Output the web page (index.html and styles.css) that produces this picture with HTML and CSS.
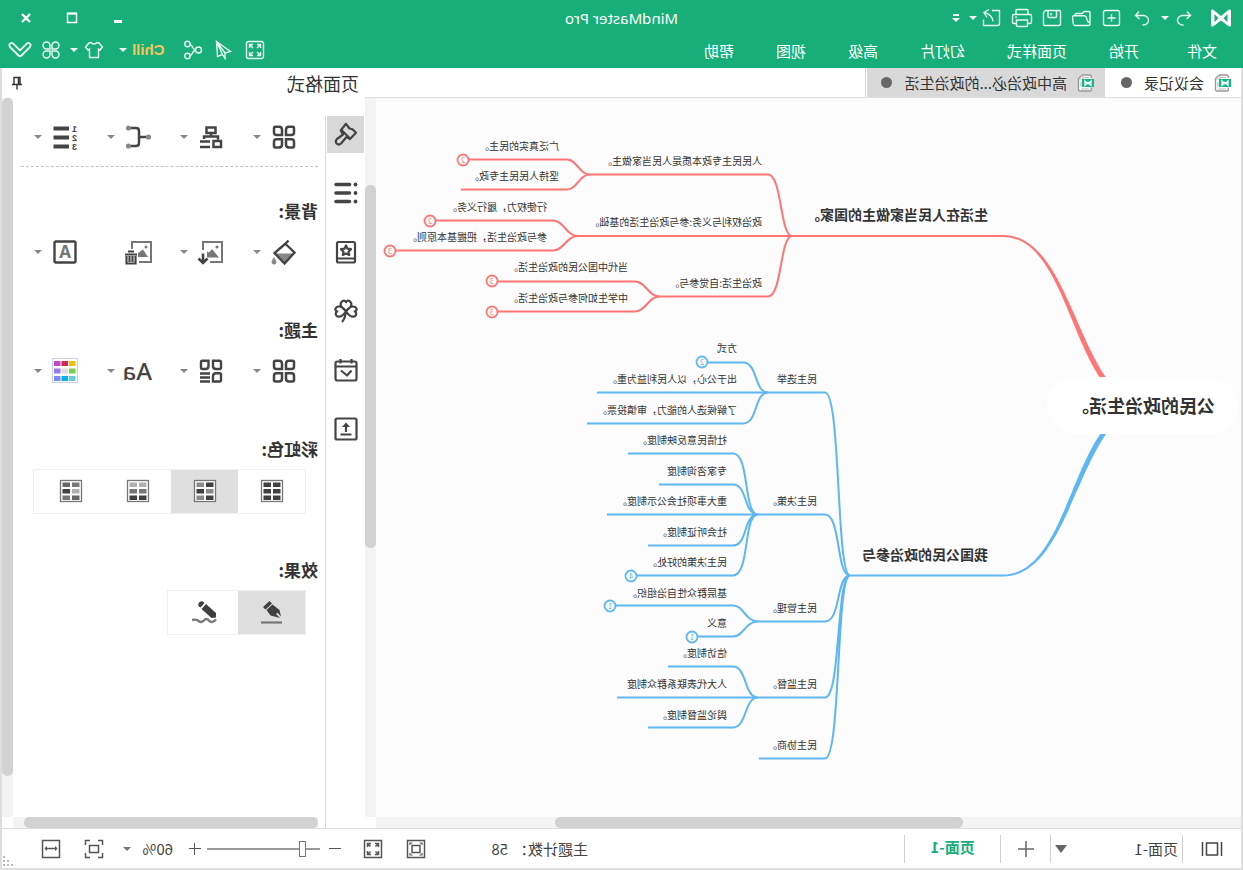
FILE: index.html
```html
<!DOCTYPE html>
<html lang="zh-CN">
<head>
<meta charset="utf-8">
<title>MindMaster Pro</title>
<link rel="stylesheet" href="styles.css">
</head>
<body>
<div class="window">
  <header class="header">
    <div class="titlebar">
      <div class="quick">
        <svg class="logo" width="20" height="18" viewBox="0 0 20 18"><path fill="#fff" stroke="none" fill-rule="evenodd" d="M0 2Q0 0 2 .5L10 7L18 .5Q20 0 20 2V16Q20 18 18 17.500L10 11.500L2 17.500Q0 18 0 16ZM3.500 5V13L7.500 9.200ZM16.500 5V13L12.500 9.200Z"/></svg>
        <button class="qbtn" aria-label="撤销"><svg width="20" height="20" viewBox="0 0 20 20"><path d="M7 3.500L3.500 7.500L7.500 11M4 7.500H11.500A5 4.700 0 0 1 11.500 17H10.500"/></svg></button>
        <button class="drop" aria-label="撤销列表"></button>
        <button class="qbtn after-drop" aria-label="恢复"><svg width="20" height="20" viewBox="0 0 20 20"><path d="M13 3.500L16.500 7.500L12.500 11M16 7.500H8.500A5 4.700 0 0 0 8.500 17H9.500"/></svg></button>
        <button class="qbtn" aria-label="新建"><svg width="20" height="20" viewBox="0 0 20 20"><rect x="2.500" y="2.500" width="16" height="15" rx="2"/><path d="M10.500 6V14M6.500 10H14.500"/></svg></button>
        <button class="qbtn" aria-label="打开"><svg width="20" height="20" viewBox="0 0 20 20"><path d="M2 16.500V4.500Q2 3.500 3 3.500H8L10 5.500H15.500Q17 5.500 17 7.500M2 16Q2 17.500 3.500 17.500H17Q18.500 17.500 18.700 16L19.500 9.500Q19.500 7.700 18 7.700H8Q6.300 7.700 5.800 9L4.500 13Q4 14.500 2 14.500"/></svg></button>
        <button class="qbtn" aria-label="保存"><svg width="20" height="20" viewBox="0 0 20 20"><path d="M3 2.500H16.500L18.500 4.500V16.500Q18.500 17.500 17.500 17.500H3Q1.500 17.500 1.500 16V4Q1.500 2.500 3 2.500ZM5.500 2.500V8.500Q5.500 9.500 6.500 9.500H13Q14 9.500 14 8.500V2.500M11 5V7.500"/></svg></button>
        <button class="qbtn" aria-label="打印"><svg width="22" height="20" viewBox="0 0 22 20"><path d="M5 6.500V2.500Q5 1.500 6 1.500H16Q17 1.500 17 2.500V6.500M5 15.500H3Q1.500 15.500 1.500 14V8Q1.500 6.500 3 6.500H19Q20.500 6.500 20.500 8V14Q20.500 15.500 19 15.500H17M5.500 12H16.500V17.500Q16.500 18.500 15.500 18.500H6.500Q5.500 18.500 5.500 17.500ZM16 9.300H18"/></svg></button>
        <button class="qbtn" aria-label="导出"><svg width="20" height="20" viewBox="0 0 20 20"><path d="M10 2.500H2.500V15.500Q2.500 17.500 4.500 17.500H18.500V11.500M13 1.500L18 4.500L15 9.500M18 4.500Q10 6 9 13.500"/></svg></button>
        <button class="drop" aria-label="导出列表"></button>
        <button class="drop more" aria-label="自定义"></button>
      </div>
      <h1 class="apptitle">MindMaster Pro</h1>
      <div class="winbtns">
        <button aria-label="最小化"><svg width="12" height="12"><path d="M2 9.500H10" stroke-width="3"/></svg></button>
        <button aria-label="最大化"><svg width="12" height="12"><path d="M1.500 1.500H10.500V10.500H1.500Z" stroke-width="1.500"/><path d="M1 1.500H11" stroke-width="2"/></svg></button>
        <button aria-label="关闭"><svg width="12" height="12"><path d="M2 2L10 10M10 2L2 10" stroke-width="2.400"/></svg></button>
      </div>
    </div>
    <div class="menubar">
      <nav class="menus">
        <button class="file">文件</button><button>开始</button><button>页面样式</button><button>幻灯片</button><button>高级</button><button>视图</button><button>帮助</button>
      </nav>
      <div class="menutools">
        <button aria-label="全屏"><svg width="20" height="20" viewBox="0 0 20 20"><rect x="1.500" y="1.500" width="17" height="17" rx="2"/><path d="M4.500 8V4.500H8M4.500 4.500L8 8M12 4.500H15.500V8M15.500 4.500L12 8M4.500 12V15.500H8M4.500 15.500L8 12M12 15.500H15.500V12M15.500 15.500L12 12"/></svg></button>
        <button class="g12" aria-label="发送"><svg width="20" height="20" viewBox="0 0 20 20"><path d="M16.500 1.500L2.500 11.500L8 13V18.500L10.500 14.500L15.500 16.500ZM16.500 1.500L8 13M16.500 1.500L10.500 14.500"/></svg></button>
        <button class="g10" aria-label="分享"><svg width="20" height="20" viewBox="0 0 20 20"><circle cx="4.500" cy="10" r="3"/><circle cx="15.500" cy="4" r="2.700"/><circle cx="15.500" cy="16" r="2.700"/><path d="M7.300 9.500Q9.500 9.500 10.300 7.500Q11 5 13 4.500M7.300 10.500Q9.500 10.500 10.300 12.500Q11 15 13 15.500"/></svg></button>
        <button class="chill">Chill</button>
        <button class="drop g5" aria-label="主题列表"></button>
        <button class="g15" aria-label="换肤"><svg width="20" height="20" viewBox="0 0 20 20"><path d="M7 2.500Q10 5.500 13 2.500L15 3L18.500 7L16 10L14.500 9V17.500H5.500V9L4 10L1.500 7L5 3Z"/></svg></button>
        <button class="drop g6" aria-label="皮肤列表"></button>
        <button class="g8" aria-label="应用"><svg width="20" height="20" viewBox="0 0 20 20"><path d="M9 9H5.500A3.500 3.500 0 1 1 9 5.500ZM11 9V5.500A3.500 3.500 0 1 1 14.500 9ZM9 11V14.500A3.500 3.500 0 1 1 5.500 11ZM11 11H14.500A3.500 3.500 0 1 1 11 14.500Z"/></svg></button>
        <button class="g8" aria-label="收起"><svg width="24" height="20" viewBox="0 0 24 20"><path d="M1.500 4.500Q3.500 1.500 5.500 4L12 10.500L18.500 4Q20.500 1.500 22.500 4.500Q23 6 21.500 7.500L13.500 15.500Q12 17 10.500 15.500L2.500 7.500Q1 6 1.500 4.500Z" stroke-width="1.800"/></svg></button>
      </div>
    </div>
  </header>

  <main class="main">
    <section class="workspace">
      <div class="tabs">
        <button class="tab"><svg class="doc" width="17" height="18" viewBox="0 0 17 18"><use href="#doc"/></svg><span>会议记录</span><i class="dot"></i></button>
        <button class="tab current"><svg class="doc" width="17" height="18" viewBox="0 0 17 18"><use href="#doc"/></svg><span>高中政治必...的政治生活</span><i class="dot"></i></button>
        <div class="tabrest"></div>
      </div>
      <div class="canvas">
        <svg class="map" width="865" height="719" viewBox="2 98 865 719">
          <g class="red">
            <path class="trunk" d="M92 406C165 406 167 235 240 235V237C170 237 171 406 99 406Z"/>
            <path d="M240 236H666M449 236H451C463 236 461 174.500 475 174.500H654M451 236C463 236 461 296.500 475 296.500H584"/>
            <path d="M653 174.500C664 174.500 666 159.500 676 159.500H774M653 174.500C664 174.500 666 189.500 676 189.500H782"/>
            <path d="M665 236C677 236 679 220.500 690 220.500H807M665 236C677 236 679 250.500 690 250.500H847"/>
            <path d="M583 296.500C595 296.500 597 281.500 608 281.500H745M583 296.500C595 296.500 597 311.500 608 311.500H745"/>
            <circle cx="780" cy="160" r="5.500"/><circle cx="813" cy="221" r="5.500"/><circle cx="853" cy="251" r="5.500"/><circle cx="751" cy="281" r="5.500"/><circle cx="751" cy="312" r="5.500"/>
            <g class="count"><text x="780" y="163">2</text><text x="813" y="224">2</text><text x="853" y="254">3</text><text x="751" y="284">3</text><text x="751" y="315">3</text></g>
          </g>
          <g class="blue">
            <path class="trunk" d="M92 406C165 406 167 576.500 240 576.500V574.500C170 574.500 171 406 99 406Z"/>
            <path d="M240 575.500H393C407 575.500 402 392.500 418 392.500H646M393 575.500C407 575.500 402 514.500 418 514.500H636M393 575.500C407 575.500 402 621.500 418 621.500H486M393 575.500C407 575.500 402 697.500 418 697.500H626M393 575.500C407 575.500 402 758.500 418 758.500H484"/>
            <path d="M475 392.500C489 392.500 485 362.500 500 362.500H535M475 392.500C489 392.500 485 423.500 500 423.500H656"/>
            <path d="M485 514.500C500 514.500 493 453.500 510 453.500H615M485 514.500C500 514.500 495 484.500 510 484.500H584M485 514.500C500 514.500 495 545.500 510 545.500H595M485 514.500C500 514.500 493 575.500 510 575.500H606"/>
            <path d="M485 621.500C498 621.500 499 605.500 510 605.500H627M485 621.500C498 621.500 499 636.500 510 636.500H545"/>
            <path d="M485 697.500C499 697.500 496 666.500 510 666.500H575M485 697.500C499 697.500 496 727.500 510 727.500H595"/>
            <circle cx="541" cy="362" r="5.500"/><circle cx="612" cy="576" r="5.500"/><circle cx="633" cy="606" r="5.500"/><circle cx="551" cy="637" r="5.500"/>
            <g class="count"><text x="541" y="365">2</text><text x="612" y="579">4</text><text x="633" y="609">1</text><text x="551" y="640">1</text></g>
          </g>
          <rect class="root" x="5" y="377" width="191" height="57" rx="28"/>
          <text class="t-root" x="28" y="413">公民的政治生活。</text>
          <g class="t-main">
            <text x="255" y="220">生活在人民当家做主的国家。</text>
            <text x="255" y="560">我国公民的政治参与</text>
          </g>
          <g class="t-sub">
            <text x="481" y="165">人民民主专政本质是人民当家做主。</text>
            <text x="481" y="226">政治权利与义务:参与政治生活的基础。</text>
            <text x="481" y="287">政治生活:自觉参与。</text>
            <text x="684" y="150">广泛真实的民主。</text>
            <text x="684" y="180">坚持人民民主专政。</text>
            <text x="696" y="211">行使权力，履行义务。</text>
            <text x="696" y="241">参与政治生活，把握基本原则。</text>
            <text x="615" y="271">当代中国公民的政治生活。</text>
            <text x="615" y="302">中学生如何参与政治生活。</text>
            <text x="426" y="383">民主选举</text>
            <text x="426" y="505">民主决策。</text>
            <text x="426" y="612">民主管理。</text>
            <text x="426" y="688">民主监督。</text>
            <text x="426" y="749">民主协商。</text>
            <text x="506" y="352">方式</text>
            <text x="506" y="383">出于公心，以人民利益为重。</text>
            <text x="506" y="414">了解候选人的能力，审慎投票。</text>
            <text x="516" y="444">社情民意反映制度。</text>
            <text x="516" y="475">专家咨询制度</text>
            <text x="516" y="505">重大事项社会公示制度。</text>
            <text x="516" y="536">社会听证制度。</text>
            <text x="516" y="566">民主决策的好处。</text>
            <text x="516" y="597">基层群众性自治组织。</text>
            <text x="516" y="627">意义</text>
            <text x="516" y="657">信访制度。</text>
            <text x="516" y="688">人大代表联系群众制度</text>
            <text x="516" y="719">舆论监督制度。</text>
          </g>
        </svg>
      </div>
      <div class="vbar canvas-v"><i></i></div>
      <div class="hbar canvas-h"><i></i></div>
    </section>

    <aside class="panel">
      <div class="panelhead">
        <h2>页面格式</h2>
        <button aria-label="固定"><svg width="12" height="14" viewBox="0 0 12 14"><path d="M3 8.500V1.500H9V8.500M1 8.500H11M6 8.500V13.500M4.500 1.500V8.500" fill="none" stroke="#333" stroke-width="1.400"/></svg></button>
      </div>
      <nav class="rail">
        <button class="on" aria-label="格式"><svg width="24" height="24" viewBox="0 0 24 24"><path d="M12 1.800L8.500 6.500L5.500 7.200L2 10.800L8 17L11.500 15L17 21.500Q19 23.500 21.500 21.500Q23 19 21 17L15 12.500L17.300 8.500ZM16.500 8L8 16.500"/></svg></button>
        <button aria-label="大纲"><svg width="24" height="24" viewBox="0 0 24 24"><path d="M8.500 3.500H22M8.500 12H22M8.500 20.500H22" stroke-width="3.600" stroke-linecap="round"/><g fill="#444" stroke="none"><circle cx="2.500" cy="3.500" r="1.900"/><circle cx="2.500" cy="12" r="1.900"/><circle cx="2.500" cy="20.500" r="1.900"/></g></svg></button>
        <button aria-label="收藏"><svg width="24" height="24" viewBox="0 0 24 24"><rect x="3" y="2" width="18" height="20.500" rx="1.500"/><path d="M3 18.500H21M12 5.500L13.500 8.700L17 9.200L14.500 11.700L15.200 15L12 13.400L8.800 15L9.500 11.700L7 9.200L10.500 8.700Z"/></svg></button>
        <button aria-label="剪贴画"><svg width="24" height="24" viewBox="0 0 24 24"><path d="M12 12C7 8.500 5.500 5.500 7.500 3C9 1 11.500 1.200 12 3.200C12.500 1.200 15 1 16.500 3C18.500 5.500 17 8.500 12 12C8.500 7.500 4.500 6.500 2.300 8.500C.7 10 1.300 12 3.300 12.500C1.200 13.500 1.200 16 3.200 17.200C6 18.600 9.500 16.500 12 12C14.500 16.500 18 18.600 20.800 17.200C22.800 16 22.800 13.500 20.700 12.500C22.700 12 23.300 10 21.700 8.500C19.500 6.500 15.500 7.500 12 12Q12.500 19 16 23"/></svg></button>
        <button aria-label="任务"><svg width="24" height="24" viewBox="0 0 24 24"><rect x="1.500" y="3.500" width="21" height="19" rx="2"/><path d="M1.500 8.500H22.500M6.500 1V5.500M17.500 1V5.500M6.500 12.500L11 17.500L17 12.500"/></svg></button>
        <button aria-label="上传"><svg width="24" height="24" viewBox="0 0 24 24"><rect x="1.500" y="1.500" width="21" height="21" rx="1.500"/><path d="M6.500 17.500H17.500M12 15V8"/><path d="M12 5.500L16 10H8Z" fill="#444" stroke="none"/></svg></button>
      </nav>
      <div class="format">
        <div class="tools">
          <button aria-label="布局"><svg width="28" height="28" viewBox="0 0 28 28"><use href="#four"/></svg></button>
          <button aria-label="结构"><svg width="28" height="28" viewBox="0 0 28 28"><path d="M9.500 4.500H18.500V10H9.500ZM14 10V13.500M7 16.500V13.500H21V16M4 18H11.500V24H4ZM15 18.500H25M15 24H25" stroke-width="2.500"/></svg></button>
          <button aria-label="连接线"><svg width="28" height="28" viewBox="0 0 28 28"><path d="M5 14H13M21 5H16Q13 5 13 8V20Q13 23 16 23H21" stroke-width="2.500"/><g fill="#888" stroke="none"><circle cx="3.500" cy="14" r="2.600"/><circle cx="23.500" cy="5" r="2.600"/><circle cx="23.500" cy="23" r="2.600"/></g></svg></button>
          <button aria-label="编号"><svg width="28" height="28" viewBox="0 0 28 28"><path d="M10 5.500H25.500M10 14.500H25.500M10 23.500H25.500" stroke-width="4"/><g class="nums"><text x="2" y="9">1</text><text x="2" y="18">2</text><text x="2" y="27">3</text></g></svg></button>
        </div>
        <hr>
        <h3>背景:</h3>
        <div class="tools">
          <button aria-label="填充"><svg width="28" height="28" viewBox="0 0 28 28"><path d="M4 15.500H23L13.500 25Z" fill="#888" stroke="none"/><path d="M9.500 2.500L13 6L23.500 15L13.500 25.500L3.500 14.500L13 5.500" stroke-width="2.400"/><path d="M24 19Q27.500 24 26 25.500Q24 27.500 22 25.500Q20.500 24 24 19Z" fill="#888" stroke="none"/></svg></button>
          <button aria-label="插入图片"><svg width="28" height="28" viewBox="0 0 28 28"><path d="M15 24H3V4H22V12" stroke="#777" stroke-width="2"/><path d="M6 19.500L13 11L16 14.500L18 13.500V19.500Z" fill="#777" stroke="none"/><circle cx="8" cy="9" r="1.500" fill="#777" stroke="none"/><path d="M22 15.500V25M17.500 20.500L22 25L26.500 20.500" stroke-width="2.600"/></svg></button>
          <button class="nodrop" aria-label="删除图片"><svg width="28" height="28" viewBox="2 0 28 28"><path d="M15 24H3V4H22V11" stroke="#777" stroke-width="2"/><path d="M6 19L11 11.500L16 15V19Z" fill="#777" stroke="none"/><circle cx="8" cy="9" r="1.500" fill="#777" stroke="none"/><path d="M17 16.500H29M20 13.500H26M18.500 18V25.500H27.500V18M21.500 18V24M24.500 18V24" stroke-width="2.200"/></svg></button>
          <button aria-label="水印"><svg width="28" height="28" viewBox="0 0 28 28"><rect x="3.500" y="3.500" width="21" height="21" rx="1.500" stroke-width="2.400"/><text class="mark" x="14" y="20">A</text></svg></button>
        </div>
        <h3 class="far">主题:</h3>
        <div class="tools">
          <button aria-label="主题"><svg width="28" height="28" viewBox="0 0 28 28"><use href="#four"/></svg></button>
          <button aria-label="主题样式"><svg width="28" height="28" viewBox="0 0 28 28"><path d="M4 5.200Q4 3.800 5.400 3.800H12V9Q12 12 9 12H5.400Q4 12 4 10.600ZM16.500 3.800H22.600Q24 3.800 24 5.200V10.600Q24 12 22.600 12H19.500Q16.500 12 16.500 9ZM4 17.500Q4 16.200 5.400 16.200H9Q12 16.200 12 19.200V24.500H5.400Q4 24.500 4 23ZM15 16.500H25M15 20.500H25M15 24.500H25" stroke-width="2.400"/></svg></button>
          <button class="aa" aria-label="字体">Aa</button>
          <button aria-label="颜色"><svg width="28" height="28" viewBox="0 0 28 28"><rect x="1.500" y="1.500" width="25" height="24" fill="#fff" stroke="#ccd2e8"/><g stroke="none"><path fill="#edc200" d="M3.500 4H10V9H3.500Z"/><path fill="#d8264f" d="M11 4H17.500V9H11Z"/><path fill="#c24bcb" d="M18.500 4H25V9H18.500Z"/><path fill="#78d04b" d="M3.500 11.500H10V16.500H3.500Z"/><path fill="#ddd" d="M11 11.500H17.500V16.500H11Z"/><path fill="#9678f0" d="M18.500 11.500H25V16.500H18.500Z"/><path fill="#66cbdc" d="M3.500 19H10V24H3.500Z"/><path fill="#00b5ee" d="M11 19H17.500V24H11Z"/><path fill="#7c8afa" d="M18.500 19H25V24H18.500Z"/></g></svg></button>
        </div>
        <h3 class="far">彩虹色:</h3>
        <div class="seg">
          <button aria-label="单色"><svg width="24" height="24" viewBox="0 0 24 24"><use href="#sheet"/><g fill="#404040"><path d="M3.500 3.500H11V8H3.500ZM13 3.500H20.500V8H13ZM3.500 10H11V14.500H3.500ZM13 10H20.500V14.500H13ZM3.500 16.500H11V21H3.500ZM13 16.500H20.500V21H13Z"/></g></svg></button>
          <button class="on" aria-label="彩虹一"><svg width="24" height="24" viewBox="0 0 24 24"><use href="#sheet"/><path fill="#404040" d="M3.500 3.500H11V8H3.500ZM13 10H20.500V14.500H13ZM3.500 16.500H11V21H3.500Z"/><path fill="#8a8a8a" d="M13 3.500H20.500V8H13ZM3.500 10H11V14.500H3.500ZM13 16.500H20.500V21H13Z"/></svg></button>
          <button aria-label="彩虹二"><svg width="24" height="24" viewBox="0 0 24 24"><use href="#sheet"/><path fill="#b0b0b0" d="M3.500 3.500H11V8H3.500ZM13 3.500H20.500V8H13Z"/><path fill="#777" d="M3.500 10H11V14.500H3.500ZM13 10H20.500V14.500H13Z"/><path fill="#404040" d="M3.500 16.500H11V21H3.500ZM13 16.500H20.500V21H13Z"/></svg></button>
          <button class="wide" aria-label="彩虹三"><svg width="24" height="24" viewBox="0 0 24 24"><use href="#sheet"/><path fill="#777" d="M3.500 3.500H11V8H3.500ZM13 16.500H20.500V21H13Z"/><path fill="#666" d="M13 3.500H20.500V8H13ZM3.500 16.500H11V21H3.500Z"/><path fill="#b0b0b0" d="M3.500 10H11V14.500H3.500Z"/><path fill="#404040" d="M13 10H20.500V14.500H13Z"/></svg></button>
        </div>
        <h3 class="farther">效果:</h3>
        <div class="seg">
          <button class="on" aria-label="标准"><svg width="26" height="26" viewBox="0 0 26 26"><path d="M3 23.500H24" stroke="#777" stroke-width="2.200"/><path fill="#404040" d="M15.500 2L22 8L19.500 10.500L13 4.500ZM12.500 5.500L18.500 11L14.500 16.500L5 19L9 15L7.500 13.800L4 17.500L5.500 11Z"/></svg></button>
          <button class="wide" aria-label="手绘"><svg width="26" height="26" viewBox="0 0 26 26"><path d="M2 20.500Q5 24 8 22.500Q11 19 13 20.500Q17 25 20 21.500Q22 20 26 21" fill="none" stroke="#777" stroke-width="2.400"/><path fill="#404040" d="M13.500 4L15 2.500Q17 1.500 19 3.500Q20.500 5.500 19 7.500L17.500 8.500ZM12 5L16.500 10L6.500 19L2 18.500V14Z"/></svg></button>
        </div>
      </div>
      <div class="vbar panel-v"><i></i></div>
      <div class="hbar panel-h"><i></i></div>
    </aside>
  </main>

  <footer class="status">
    <div class="pages">
      <button class="outline" aria-label="页面视图"><svg width="22" height="16" viewBox="0 0 22 16"><path d="M5.500 2H16.500V14H5.500ZM1.500 1V15M20.500 1V15" fill="none" stroke="#444" stroke-width="1.500"/></svg></button>
      <button class="page">页面-1</button>
      <button class="pagelist" aria-label="页面列表"></button>
      <button class="add" aria-label="新建页面"><svg width="18" height="18"><path d="M9 1V17M1 9H17" stroke="#666" stroke-width="1.500"/></svg></button>
      <button class="page active">页面-1</button>
    </div>
    <div class="topics"><span>主题计数：</span><span>58</span></div>
    <div class="zoom">
      <button aria-label="适合页面"><svg width="20" height="20" viewBox="0 0 20 20"><rect x="1.500" y="1.500" width="17" height="17"/><rect x="6" y="6.500" width="8" height="7"/><path d="M4 6V4H6.500M13.500 4H16V6M4 14V16H6.500M13.500 16H16V14" stroke-width="1.200"/></svg></button>
      <button class="z23" aria-label="全屏"><svg width="20" height="20" viewBox="0 0 20 20"><rect x="1.500" y="1.500" width="17" height="17"/><path d="M4.500 8V4.500H8M4.500 4.500L7.500 7.500M12 4.500H15.500V8M15.500 4.500L12.500 7.500M4.500 12V15.500H8M4.500 15.500L7.500 12.500M12 15.500H15.500V12M15.500 15.500L12.500 12.500"/></svg></button>
      <button class="z22" aria-label="缩小"><svg width="12" height="12"><path d="M0 5.500H12" stroke-width="1"/></svg></button>
      <input class="range" type="range" min="0" max="100" value="13" aria-label="缩放">
      <button class="z6" aria-label="放大"><svg width="12" height="12"><path d="M0 5.500H12M6.500 0V12" stroke-width="1"/></svg></button>
      <span class="percent">60%</span>
      <button class="drop grey" aria-label="缩放比例"></button>
      <button class="z19" aria-label="适合窗口"><svg width="20" height="20" viewBox="0 0 20 20"><path d="M1.500 6V1.500H6M14 1.500H18.500V6M18.500 14V18.500H14M6 18.500H1.500V14"/><rect x="5.500" y="6.500" width="9" height="7"/></svg></button>
      <button class="z23" aria-label="适合宽度"><svg width="20" height="20" viewBox="0 0 20 20"><rect x="1.500" y="1.500" width="17" height="17"/><path d="M4 9.500H16" /><path d="M3.500 9.500L6 7V12ZM16.500 9.500L14 7V12Z" fill="#555" stroke="none"/></svg></button>
      <svg class="grip" width="12" height="12"><path d="M9 1h2v2h-2zM9 5h2v2h-2zM5 5h2v2h-2zM9 9h2v2h-2zM5 9h2v2h-2zM1 9h2v2h-2z" fill="#bbb" stroke="none"/></svg>
    </div>
  </footer>
</div>

<svg class="defs" width="0" height="0" aria-hidden="true">
  <defs>
    <g id="doc"><path d="M2.700 4V2.500Q2.700 1 4 1H11.500L15.500 4.500V15.500Q15.500 17 14 17H4Q2.700 17 2.700 15.500V13.500" fill="#fff" stroke="#999" stroke-width="1.400"/><path d="M5 3.500H10M11 1.500V5H15M5 15H13M13 8V12.500" fill="none" stroke="#bbb" stroke-width="1.200"/><rect x="0" y="5" width="12" height="8" fill="#12b886"/><path d="M3 11.200V7L6 9.800L9 7V11.200L6 8.400Z" fill="none" stroke="#fff" stroke-width="1.300"/></g>
    <g id="four" fill="none" stroke="#444" stroke-width="2.500"><path d="M4 5.200Q4 3.800 5.400 3.800H9Q12 3.800 12 6.800V12H6.500Q4 12 4 9.500Z"/><path d="M24 5.200Q24 3.800 22.600 3.800H19Q16 3.800 16 6.800V12H21.500Q24 12 24 9.500Z"/><path d="M4 23Q4 24.400 5.400 24.400H9Q12 24.400 12 21.400V16.200H6.500Q4 16.200 4 18.700Z"/><path d="M24 23Q24 24.400 22.600 24.400H19Q16 24.400 16 21.400V16.200H21.500Q24 16.200 24 18.700Z"/></g>
    <rect id="sheet" x="1.500" y="1.500" width="21" height="21" fill="#fff" stroke="#777" stroke-width="1.300"/>
  </defs>
</svg>
</body>
</html>
```
FILE: styles.css
```css
* { box-sizing: border-box; }
html, body { height: 100%; }
body {
  margin: 0;
  overflow: hidden;
  color: #333;
  font: 15px/20px "Noto Sans CJK SC", sans-serif;
}
button {
  padding: 0;
  border: 0;
  background: none;
  color: inherit;
  font: inherit;
  display: flex;
  align-items: center;
  justify-content: center;
  white-space: nowrap;
}
h1, h2, h3 { margin: 0; font-weight: 400; }
svg { display: block; flex: none; }
.defs { position: absolute; }

/* the whole window is shown flipped left to right */
.window {
  height: 100%;
  min-height: 700px;
  display: grid;
  grid-template-rows: 68px 1fr 42px;
  transform: scaleX(-1);
  background: #fff;
}

/* header */
.header { background: #17ae79; color: #fff; }
.header svg { fill: none; stroke: #e8f8f2; stroke-width: 1.4; }
.titlebar {
  height: 36px;
  display: grid;
  grid-template-columns: 1fr auto 1fr;
  align-items: center;
}
.quick { display: flex; align-items: center; padding-left: 12px; }
.logo { margin-right: 12px; }
.qbtn { width: 30px; height: 30px; }
.after-drop { margin-left: 4px; }
.drop { width: 8px; height: 20px; }
.drop::after {
  content: "";
  border: 4px solid transparent;
  border-top-color: #fff;
  border-bottom: 0;
}
.drop.grey::after { border-top-color: #777; }
.more { margin-left: 9px; flex-direction: column; }
.more::before { content: ""; width: 6px; height: 2px; margin-bottom: 2px; background: #fff; }
.apptitle { font: 15px/20px "Noto Sans", sans-serif; }
.winbtns { display: flex; justify-content: flex-end; gap: 6px; padding-right: 6px; }
.winbtns button { width: 40px; height: 28px; }
.winbtns svg { stroke: #fff; }
.menubar { height: 32px; display: flex; justify-content: space-between; }
.menus { display: flex; gap: 42px; padding-left: 26px; }
.menus button { height: 30px; }
.menus .file { margin-right: 6px; }
.menutools { display: flex; align-items: center; padding-right: 8px; height: 28px; }
.chill { margin-left: 19px; color: #f7c55c; font: bold 15px/20px "Liberation Sans", sans-serif; }
.g5 { margin-left: 5px; }
.g6 { margin-left: 6px; }
.g8 { margin-left: 9px; }
.g10 { margin-left: 10px; }
.g12 { margin-left: 12px; }
.g15 { margin-left: 15px; }

/* main area */
.main {
  min-height: 0;
  display: grid;
  grid-template-columns: 1fr 363px;
  border: solid #dedede;
  border-width: 0 2px;
}
.workspace {
  min-width: 0;
  display: grid;
  grid-template: 30px 1fr 11px / 1fr 11px;
}
.tabs { grid-column: 1 / 3; display: flex; border-bottom: 1px solid #dedede; }
.tab { padding: 0 16px 0 10px; }
.tab span { margin: 0 12px 0 10px; }
.tab.current { background: #d9d9d9; padding: 0 14px 0 11px; }
.tabrest { flex: 1; margin-left: 1px; border-left: 1px solid #d4d4d4; }
.dot { width: 11px; height: 11px; border-radius: 50%; background: #666; }
.canvas { min-height: 0; min-width: 0; overflow: hidden; background: #fcfcfc; }
.vbar, .hbar { display: grid; background: #f4f4f4; }
.vbar i, .hbar i { border-radius: 5px; background: #d2d2d2; }
.canvas-v { grid-template-rows: 87fr 363fr 269fr; }
.canvas-v i { grid-row: 2; }
.canvas-h { grid-template-columns: 278fr 408fr 179fr; }
.canvas-h i { grid-column: 2; }

/* mind map */
.map { fill: none; stroke-width: 2; }
.map .red { stroke: #ff7575; }
.map .blue { stroke: #5eb6f2; }
.map .trunk { stroke: none; }
.red .trunk { fill: #ff7575; }
.blue .trunk { fill: #5eb6f2; }
.map circle { fill: #fff; stroke-width: 1.8; }
.map .root { fill: #fff; }
.map text { fill: #333; stroke: none; }
.count text { font-size: 8px; text-anchor: middle; }
.map .red .count text { fill: #ff7575; }
.map .blue .count text { fill: #5eb6f2; }
.t-root { font-size: 18px; font-weight: 700; }
.t-main { font-size: 14px; font-weight: 700; }
.t-sub { font-size: 10px; }

/* side panel */
.panel {
  min-height: 0;
  display: grid;
  grid-template: 30px 1fr 11px / 40px 1fr 11px;
}
.panelhead {
  grid-column: 1 / 4;
  display: flex;
  align-items: center;
  justify-content: space-between;
  padding: 0 9px 0 6px;
}
.panelhead h2 { font-size: 18px; line-height: 28px; }
.rail {
  grid-row: 2 / 4;
  margin-top: 18px;
  padding-left: 1px;
  display: flex;
  flex-direction: column;
  gap: 22px;
  border-right: 1px solid #d9d9d9;
}
.rail button { width: 37px; height: 37px; padding: 0 1px 1px 0; }
.rail .on { background: #d9d9d9; }
.rail svg { fill: none; stroke: #444; stroke-width: 2.2; stroke-linejoin: round; }
.format { min-height: 0; overflow: hidden; padding: 15px 0 0 7px; }
.tools { display: grid; grid-template-columns: repeat(4, 73px); padding-left: 20px; }
.tools button { height: 48px; justify-content: flex-start; gap: 9px; }
.tools svg { fill: none; stroke: #444; }
.tools button::after {
  content: "";
  border: 4px solid transparent;
  border-top-color: #888;
  border-bottom: 0;
}
.tools .nodrop::after { display: none; }
.tools .aa { font: 500 24px/48px "Noto Sans", sans-serif; color: #444; gap: 8px; }
.nums text { font: bold 9px "Liberation Sans", sans-serif; fill: #444; stroke: none; }
.mark { font: bold 17px "Noto Sans", sans-serif; fill: #777; stroke: none; text-anchor: middle; }
.format hr { margin: 5px 8px 32px 0; border: 0; border-top: 1px dashed #c4c4c4; }
.format h3 { font-size: 17px; line-height: 24px; font-weight: 700; margin-bottom: 5px; }
.format .far { margin-top: 42px; }
.format .farther { margin-top: 44px; }
.seg {
  width: max-content;
  height: 45px;
  margin: 8px 0 0 12px;
  display: flex;
  border: 1px solid #efefef;
}
.seg button { width: 67px; padding: 0 1px 1px 0; }
.seg .wide { width: 70px; padding-right: 4px; }
.seg .on { background: #dfdfdf; }
.panel-v { grid-template-rows: 678fr 41fr; }
.panel-h { grid-column: 2; margin-left: 7px; grid-template-columns: 294fr 11fr; }

/* status bar */
.status {
  display: grid;
  grid-template-columns: 653px 1fr auto;
  align-items: center;
  border: solid #dedede;
  border-width: 1px 2px 2px;
  color: #444;
}
.pages { display: flex; align-items: center; }
.pages button { height: 28px; border-right: 1px solid #d0d0d0; }
.pages .outline { width: 59px; }
.pages .page { border-right: 0; padding-left: 4px; width: 113px; justify-content: flex-start; }
.pages .pagelist { width: 19px; padding-right: 2px; }
.pagelist::after {
  content: "";
  border: 6px solid transparent;
  border-top: 8px solid #666;
  border-bottom: 0;
}
.pages .add { width: 50px; padding-right: 2px; }
.pages .active {
  width: 96px;
  padding: 0 0 4px;
  justify-content: center;
  border-right: 1px solid #d0d0d0;
  color: #17ae79;
  font-weight: 700;
}
.topics { display: flex; gap: 5px; }
.zoom { display: flex; align-items: center; }
.zoom svg { fill: none; stroke: #555; stroke-width: 1.5; }
.z23 { margin-left: 23px; }
.z22 { margin-left: 22px; }
.z19 { margin-left: 19px; }
.z6 { margin-left: 6px; }
.percent { width: 34px; margin: 0 8px 0 16px; }
.range {
  appearance: none;
  width: 113px;
  height: 16px;
  margin: 0 0 0 9px;
  background: linear-gradient(#999, #999) center / 100% 2px no-repeat;
}
.range::-webkit-slider-thumb {
  appearance: none;
  width: 7px;
  height: 16px;
  border: 1px solid #777;
  background: #fff;
}
.grip { margin-left: 27px; align-self: flex-end; position: relative; top: 8px; }
```
